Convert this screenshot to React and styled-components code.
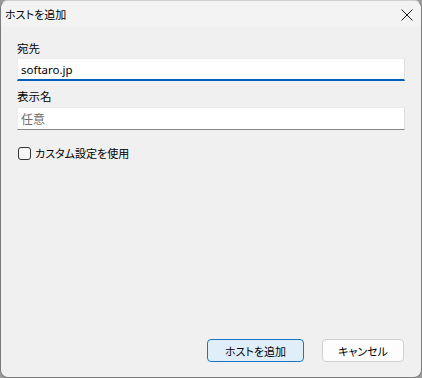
import React from "react";
import styled, { createGlobalStyle } from "styled-components";

const Global = createGlobalStyle`
  html, body { margin: 0; padding: 0; background: #9a9a9a; }
  body { width: 422px; height: 378px; overflow: hidden; }
  * { box-sizing: border-box; }
`;

const Window = styled.div`
  width: 422px;
  height: 378px;
  display: flex;
  flex-direction: column;
  border: 1px solid #7a7a7a;
  border-top-color: #d0d0d0;
  border-radius: 8px;
  overflow: hidden;
  background: #f0f0f0;
  font-family: "Noto Sans CJK JP", "Noto Sans", sans-serif;
  font-feature-settings: "palt";
  font-size: 11px;
  color: #000;
`;

const TitleBar = styled.div`
  height: 25px;
  flex: none;
  display: flex;
  align-items: center;
  justify-content: space-between;
  padding: 0 6px 0 4px;
  background: #f3f3f3;
`;

const Title = styled.span`
  font-size: 11px;
  line-height: 16px;
  margin-top: 1px;
`;

const Close = styled.button`
  width: 14px;
  height: 14px;
  border: none;
  padding: 0;
  background: transparent;
  display: flex;
  align-items: center;
  justify-content: center;
  margin-top: 2px;
  margin-right: 1px;
`;

const Body = styled.div`
  flex: 1;
  display: flex;
  flex-direction: column;
  padding: 14px 16px 15px 16px;
`;

const Label = styled.div`
  height: 16px;
  line-height: 16px;
  font-size: 11.5px;
  margin-bottom: ${(p) => p.$gap}px;
`;

const Input = styled.div`
  width: 388px;
  height: 23px;
  background: #fff;
  border: 1px solid #ececec;
  border-right-color: #e0e0e0;
  border-bottom: ${(p) => (p.$focused ? "2px solid #005fb8" : "1px solid #868686")};
  padding: 0 3px;
  display: flex;
  align-items: center;
  font-family: "Noto Sans", "Noto Sans CJK JP", sans-serif;
  font-size: 11.5px;
  color: ${(p) => (p.$placeholder ? "#6d6d6d" : "#000")};
  margin-bottom: ${(p) => p.$gap}px;
  padding-top: ${(p) => (p.$focused ? 1 : 0)}px;
`;

const PlaceholderText = styled.span`
  font-family: "Noto Sans CJK JP", sans-serif;
  font-size: 12px;
`;

const CheckRow = styled.label`
  display: flex;
  align-items: center;
  gap: 4px;
  height: 16px;
`;

const Box = styled.span`
  width: 13px;
  height: 13px;
  border: 1px solid #333;
  border-radius: 3px;
  background: #f6f6f6;
  margin-left: 1px;
`;

const Footer = styled.div`
  margin-top: auto;
  display: flex;
  justify-content: flex-end;
  gap: 18px;
  padding-right: 1px;
`;

const Button = styled.button`
  height: 23px;
  width: ${(p) => p.$w}px;
  border-radius: 4px;
  border: 1px solid ${(p) => (p.$primary ? "#1a74c7" : "#d0d0d0")};
  background: ${(p) => (p.$primary ? "#e0eef9" : "#fdfdfd")};
  font-family: "Noto Sans CJK JP", sans-serif;
  font-feature-settings: "palt";
  font-size: 11px;
  color: #000;
  padding: 0;
  line-height: 20px;
`;

export default function App() {
  return (
    <>
      <Global />
      <Window>
        <TitleBar>
          <Title>ホストを追加</Title>
          <Close aria-label="閉じる">
            <svg width="12" height="12" viewBox="0 0 12 12">
              <path d="M0.5 0.5 L11.5 11.5 M11.5 0.5 L0.5 11.5" stroke="#1a1a1a" strokeWidth="1" />
            </svg>
          </Close>
        </TitleBar>
        <Body>
          <Label $gap={2}>宛先</Label>
          <Input $focused $gap={7}>softaro.jp</Input>
          <Label $gap={3}>表示名</Label>
          <Input $placeholder $gap={15}>
            <PlaceholderText>任意</PlaceholderText>
          </Input>
          <CheckRow>
            <Box />
            <span>カスタム設定を使用</span>
          </CheckRow>
          <Footer>
            <Button $primary $w={97}>ホストを追加</Button>
            <Button $w={82}>キャンセル</Button>
          </Footer>
        </Body>
      </Window>
    </>
  );
}
